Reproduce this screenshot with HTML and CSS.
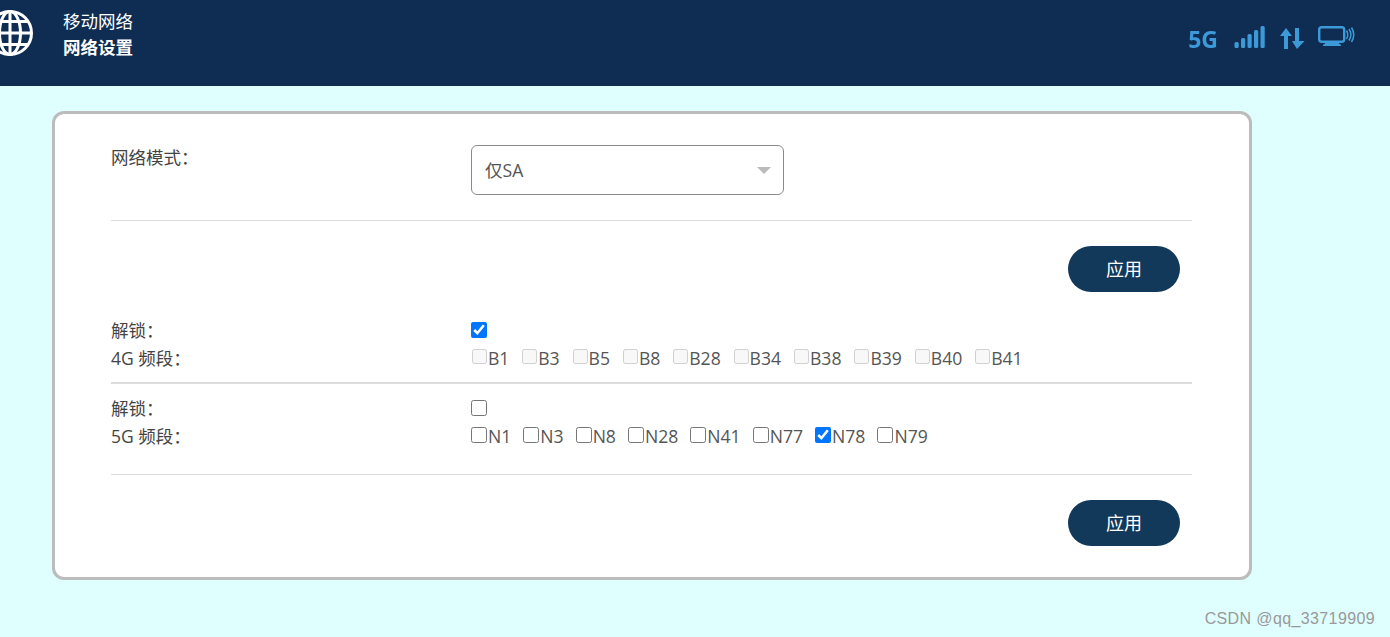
FILE: index.html
```html
<!DOCTYPE html>
<html lang="zh-CN">
<head>
<meta charset="utf-8">
<title>网络设置</title>
<link rel="stylesheet" href="styles.css">
</head>
<body>
<header class="topbar">
  <svg class="globe" width="46" height="46" viewBox="0 0 46 46" fill="none" stroke="#fff" stroke-width="3">
    <circle cx="23" cy="23" r="21.500"/>
    <ellipse cx="23" cy="23" rx="10.500" ry="21.500"/>
    <path d="M23 1.500V44.500M1.500 23H44.500M5 11.500H41M5 34.500H41"/>
  </svg>
  <div class="titles">
    <div class="title-main">移动网络</div>
    <div class="title-sub">网络设置</div>
  </div>
  <div class="status">
    <span class="status-5g">5G</span>
    <svg class="icon-signal" width="32" height="22" viewBox="0 0 32 22" fill="#3d9ad8">
      <rect x="0.500" y="16" width="4.200" height="6" rx="1.500"/>
      <rect x="7" y="12" width="4.200" height="10" rx="1.500"/>
      <rect x="13.500" y="8" width="4.200" height="14" rx="1.500"/>
      <rect x="20" y="4" width="4.200" height="18" rx="1.500"/>
      <rect x="26.500" y="0" width="4.200" height="22" rx="1.500"/>
    </svg>
    <svg class="icon-arrows" width="25" height="21" viewBox="0 0 25 21" fill="#3d9ad8">
      <path d="M6 0L12 8H8V21H4V8H0Z"/>
      <path d="M15 0H19V13H24.500L17 21L12 13H15Z"/>
    </svg>
    <svg class="icon-screen" width="37" height="22" viewBox="0 0 37 22" fill="none" stroke="#3d9ad8">
      <rect x="1.200" y="1.200" width="25" height="14.500" rx="2.500" stroke-width="2.400"/>
      <path d="M5 19.500H23L20 17H8Z" fill="#3d9ad8" stroke-width="1"/>
      <path d="M28.500 4.500C30 7 30 10.500 28.500 13M31 3C33.300 6.500 33.300 11 31 14.500M33.500 1.500C36.300 6 36.300 11.500 33.500 16" stroke-width="1.500"/>
    </svg>
  </div>
</header>
<main class="card">
  <section class="row row-mode">
    <div class="label">网络模式：</div>
    <div class="select"><span>仅SA</span><i class="caret"></i></div>
  </section>
  <div class="actions">
    <button class="btn">应用</button>
  </div>
  <section class="group group-4g">
    <div class="line">
      <div class="label">解锁：</div>
      <div class="field"><input type="checkbox" class="check" checked></div>
    </div>
    <div class="line">
      <div class="label">4G 频段：</div>
      <div class="field bands">
        <label class="band"><input type="checkbox" class="check" disabled>B1</label>
        <label class="band"><input type="checkbox" class="check" disabled>B3</label>
        <label class="band"><input type="checkbox" class="check" disabled>B5</label>
        <label class="band"><input type="checkbox" class="check" disabled>B8</label>
        <label class="band"><input type="checkbox" class="check" disabled>B28</label>
        <label class="band"><input type="checkbox" class="check" disabled>B34</label>
        <label class="band"><input type="checkbox" class="check" disabled>B38</label>
        <label class="band"><input type="checkbox" class="check" disabled>B39</label>
        <label class="band"><input type="checkbox" class="check" disabled>B40</label>
        <label class="band"><input type="checkbox" class="check" disabled>B41</label>
      </div>
    </div>
  </section>
  <section class="group group-5g">
    <div class="line">
      <div class="label">解锁：</div>
      <div class="field"><input type="checkbox" class="check"></div>
    </div>
    <div class="line">
      <div class="label">5G 频段：</div>
      <div class="field bands">
        <label class="band"><input type="checkbox" class="check">N1</label>
        <label class="band"><input type="checkbox" class="check">N3</label>
        <label class="band"><input type="checkbox" class="check">N8</label>
        <label class="band"><input type="checkbox" class="check">N28</label>
        <label class="band"><input type="checkbox" class="check">N41</label>
        <label class="band"><input type="checkbox" class="check">N77</label>
        <label class="band"><input type="checkbox" class="check" checked>N78</label>
        <label class="band"><input type="checkbox" class="check">N79</label>
      </div>
    </div>
  </section>
  <div class="actions actions-last">
    <button class="btn">应用</button>
  </div>
</main>
<div class="watermark">CSDN @qq_33719909</div>
</body>
</html>
```
FILE: styles.css
```css
* { box-sizing: border-box; }
html, body { height: 100%; }
body {
  margin: 0;
  background: #dfffff;
  color: #444;
  font: 17.500px/28px "Open Sans", "Noto Sans CJK SC", sans-serif;
  overflow: hidden;
  position: relative;
}
.topbar {
  height: 86px;
  background: #0f2d52;
  display: flex;
  align-items: flex-start;
  padding-right: 35px;
  color: #fff;
}
.globe { margin: 10px 0 0 -13px; flex: none; }
.titles { margin: 8px 0 0 30px; line-height: 26px; font-size: 17.500px; }
.title-sub { font-weight: 700; }
.status {
  margin: 26px 0 0 auto;
  display: flex;
  align-items: flex-start;
  height: 24px;
  filter: blur(0.4px);
}
.status-5g {
  font: 700 23px/24px "Open Sans", sans-serif;
  color: #3d9ad8;
  margin-top: 1px;
}
.icon-signal { margin: 0 0 0 16px; flex: none; }
.icon-arrows { margin: 2px 0 0 14px; flex: none; }
.icon-screen { margin: 0 0 0 13px; flex: none; }
.card {
  width: 1200px;
  height: 469px;
  margin: 25px 0 0 52px;
  padding: 31px 57px 0 56px;
  background: #fff;
  border: 3px solid #bcbcbc;
  border-radius: 12px;
}
.row, .line { display: flex; }
.row-mode {
  height: 76px;
  border-bottom: 1px solid #ddd;
}
.label { width: 360px; flex: none; }
.row-mode .label { margin-top: -3px; line-height: 30px; }
.select {
  width: 313px;
  height: 50px;
  padding: 0 12px 0 13px;
  border: 1px solid #8a8a8a;
  border-radius: 6px;
  display: flex;
  align-items: center;
  justify-content: space-between;
  font-size: 17.600px;
  color: #555;
}
.caret {
  width: 0;
  height: 0;
  border: 7px solid transparent;
  border-top: 7px solid #bbb;
  border-bottom: 0;
}
.actions {
  display: flex;
  justify-content: flex-end;
  padding: 25px 12px 0 0;
  height: 87px;
}
.actions-last { padding-top: 25px; height: 72px; border-top: 1px solid #ddd; }
.btn {
  width: 112px;
  height: 46px;
  padding: 0 0 2px;
  border: 0;
  border-radius: 23px;
  background: #12385a;
  color: #fff;
  font: 18px "Open Sans", "Noto Sans CJK SC", sans-serif;
}
.group-4g { height: 76px; border-bottom: 2px solid #ddd; padding-top: 8px; }
.group-5g { height: 90px; padding-top: 10px; }
.group .line { height: 28px; align-items: center; }
.field { display: flex; align-items: center; }
.check { width: 16px; height: 16px; margin: 0; flex: none; }
.bands { gap: 12px; font-size: 17.600px; color: #555; }
.band { display: flex; align-items: center; white-space: nowrap; line-height: 28px; }
.band .check { margin: -3px 1px 0 0; }
.group-4g .band .check { width: 15px; height: 15px; margin: -4px 1px 0 0.900px; }
.watermark {
  position: absolute;
  right: 15px;
  bottom: 8px;
  font: 16px/20px "Liberation Sans", sans-serif;
  color: #999;
  letter-spacing: 0.380px;
}
```
